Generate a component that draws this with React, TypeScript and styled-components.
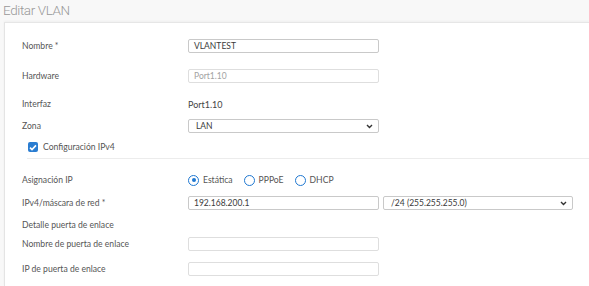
import React from 'react';
import styled, { createGlobalStyle } from 'styled-components';

const GlobalStyle = createGlobalStyle`
  html, body {
    margin: 0;
    padding: 0;
    background: #f8f8f8;
    font-family: Lato, 'Open Sans', 'Liberation Sans', sans-serif;
    overflow: hidden;
  }
`;

const Page = styled.div`
  width: 589px;
  height: 286px;
  display: flex;
  flex-direction: column;
  background: #f8f8f8;
`;

const Title = styled.h1`
  margin: 0;
  height: 22px;
  padding-left: 3px;
  font-family: Roboto, 'Open Sans', sans-serif;
  font-size: 13.5px;
  font-weight: 300;
  letter-spacing: -0.4px;
  line-height: 21px;
  color: #999;
`;

const Panel = styled.div`
  flex: 1;
  margin-left: 4px;
  background: #fff;
  border-left: 1px solid #e4e4e4;
  border-top: 1px solid #e6e6e6;
  box-shadow: 0 -1px 2px rgba(0, 0, 0, 0.04);
  padding: 15px 0 0 17px;
  display: flex;
  flex-direction: column;
`;

const Row = styled.div<{ $mt?: number }>`
  display: grid;
  grid-template-columns: 166px 1fr;
  align-items: center;
  height: 16px;
  margin-top: ${p => p.$mt ?? 0}px;
`;

const Label = styled.span`
  font-size: 8.6px;
  color: #555;
  white-space: nowrap;
`;

const Controls = styled.div`
  display: flex;
  align-items: center;
  gap: 4px;
`;

const TextBox = styled.div<{ $muted?: boolean; $w?: number }>`
  box-sizing: border-box;
  width: ${p => p.$w ?? 191}px;
  height: 14px;
  border: 1px solid ${p => (p.$muted ? '#dedede' : '#c9c9c9')};
  border-radius: 2px;
  padding-left: 5px;
  display: flex;
  align-items: center;
  font-size: 8.5px;
  color: ${p => (p.$muted ? '#a2a2a2' : '#3a3a3a')};
  background: #fff;
`;

const Select = styled(TextBox)`
  justify-content: space-between;
  padding-left: 7px;
  padding-right: 5px;
`;

const Plain = styled.span`
  font-size: 9px;
  color: #444;
`;

const CheckRow = styled.div`
  display: flex;
  align-items: center;
  gap: 5px;
  height: 16px;
  margin-top: 5px;
  padding-left: 6px;
`;

const CheckBox = styled.span`
  width: 10px;
  height: 10px;
  border-radius: 2px;
  background: #2a7dd1;
  display: flex;
  align-items: center;
  justify-content: center;
`;

const Divider = styled.div`
  height: 1px;
  background: #ececec;
  margin-top: 3px;
  margin-left: 5px;
`;

const RadioGroup = styled.div`
  display: flex;
  align-items: center;
`;

const RadioItem = styled.label`
  display: flex;
  align-items: center;
  gap: 4px;
  margin-right: 11px;
  font-size: 8.6px;
  color: #555;
`;

const RadioCircle = styled.span<{ $on?: boolean }>`
  box-sizing: border-box;
  width: 11px;
  height: 11px;
  border-radius: 50%;
  border: 1.5px solid #1f78d1;
  display: flex;
  align-items: center;
  justify-content: center;
  &::after {
    content: '';
    display: ${p => (p.$on ? 'block' : 'none')};
    width: 4px;
    height: 4px;
    border-radius: 50%;
    background: #1f78d1;
  }
`;

const Chevron = () => (
  <svg width="7" height="5" viewBox="0 0 7 5">
    <path d="M1 1 L3.5 3.5 L6 1" fill="none" stroke="#333" strokeWidth="1.4" />
  </svg>
);

const Check = () => (
  <svg width="8" height="7" viewBox="0 0 8 7">
    <path d="M1 3.6 L3 5.6 L7 1.4" fill="none" stroke="#fff" strokeWidth="1.6" />
  </svg>
);

export default function App() {
  return (
    <Page>
      <GlobalStyle />
      <Title>Editar VLAN</Title>
      <Panel>
        <Row>
          <Label>Nombre *</Label>
          <TextBox>VLANTEST</TextBox>
        </Row>
        <Row $mt={14}>
          <Label>Hardware</Label>
          <TextBox $muted>Port1.10</TextBox>
        </Row>
        <Row $mt={12}>
          <Label>Interfaz</Label>
          <Plain>Port1.10</Plain>
        </Row>
        <Row $mt={6}>
          <Label>Zona</Label>
          <Select>
            LAN
            <Chevron />
          </Select>
        </Row>
        <CheckRow>
          <CheckBox>
            <Check />
          </CheckBox>
          <Label>Configuración IPv4</Label>
        </CheckRow>
        <Divider />
        <Row $mt={13}>
          <Label>Asignación IP</Label>
          <RadioGroup>
            <RadioItem>
              <RadioCircle $on />
              Estática
            </RadioItem>
            <RadioItem>
              <RadioCircle />
              PPPoE
            </RadioItem>
            <RadioItem>
              <RadioCircle />
              DHCP
            </RadioItem>
          </RadioGroup>
        </Row>
        <Row $mt={7}>
          <Label>IPv4/máscara de red *</Label>
          <Controls>
            <TextBox>192.168.200.1</TextBox>
            <Select $w={190}>
              /24 (255.255.255.0)
              <Chevron />
            </Select>
          </Controls>
        </Row>
        <Row $mt={6}>
          <Label>Detalle puerta de enlace</Label>
        </Row>
        <Row $mt={3}>
          <Label>Nombre de puerta de enlace</Label>
          <TextBox $muted />
        </Row>
        <Row $mt={9}>
          <Label>IP de puerta de enlace</Label>
          <TextBox $muted />
        </Row>
      </Panel>
    </Page>
  );
}
